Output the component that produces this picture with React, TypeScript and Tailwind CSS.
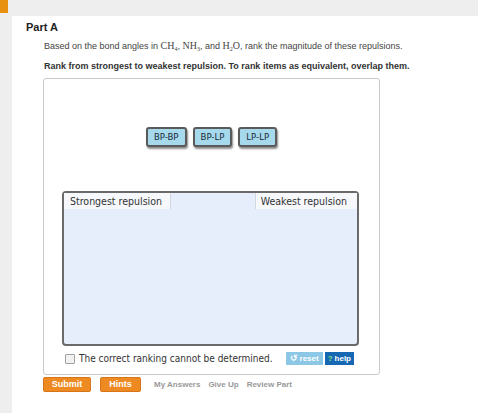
import React from "react";

const sans = { fontFamily: '"Liberation Sans", Arial, sans-serif' };
const tahoma = { fontFamily: '"DejaVu Sans Condensed", "DejaVu Sans", sans-serif' };
const serif = { fontFamily: '"Liberation Serif", "Times New Roman", serif' };

function Chip({ label }: { label: string }) {
  return (
    <div
      className="h-[20px] px-[6px] flex items-center justify-center rounded-[3px] border-2 border-[#5a5a5a] bg-[#a6d9ec] text-[9.5px] text-[#1a2a3a] shadow-[1px_2px_2px_rgba(0,0,0,0.45)]"
      style={tahoma}
    >
      {label}
    </div>
  );
}

export default function App() {
  return (
    <div className="w-[478px] h-[413px] bg-white flex flex-col overflow-hidden" style={sans}>
      {/* header strip */}
      <div className="h-[16px] bg-[#eeeeee] flex shrink-0">
        <div className="w-[8px] h-[13px] bg-[#e8900f]" />
      </div>
      <div className="flex flex-1">
        <div className="w-[12px] bg-[#eeeeee]" />
        <div className="flex-1 flex flex-col">
          <div className="pl-[14px] pt-[4px] text-[11px] font-bold text-[#222] leading-[14px]">Part A</div>
          <div className="pl-[32px] pt-[6px] text-[9px] text-[#444] leading-[11px]">
            Based on the bond angles in{" "}
            <span style={serif} className="text-[10px]">
              CH<sub className="text-[6px]">4</sub>
            </span>
            ,{" "}
            <span style={serif} className="text-[10px]">
              NH<sub className="text-[6px]">3</sub>
            </span>
            , and{" "}
            <span style={serif} className="text-[10px]">
              H<sub className="text-[6px]">2</sub>O
            </span>
            , rank the magnitude of these repulsions.
          </div>
          <div className="pl-[32px] pt-[9px] text-[9px] font-bold text-[#333] leading-[11px]">
            Rank from strongest to weakest repulsion. To rank items as equivalent, overlap them.
          </div>

          {/* ranking widget */}
          <div className="ml-[31px] mt-[6px] w-[337px] h-[297px] border border-[#c8c8c8] rounded-[3px] flex flex-col">
            <div className="flex gap-[6px] justify-center pt-[48px]">
              <Chip label="BP-BP" />
              <Chip label="BP-LP" />
              <Chip label="LP-LP" />
            </div>
            <div className="ml-[18px] mt-[44px] w-[297px] h-[155px] border-2 border-[#6a6a6a] rounded-[4px] bg-[#e6eefb] flex flex-col">
              <div className="flex justify-between text-[10.5px] text-[#333] leading-[16px]" style={tahoma}>
                <div className="bg-[#f6f8fc] pl-[6px] pr-[8px] border-r border-[#d4d8de]">Strongest repulsion</div>
                <div className="bg-[#f6f8fc] pl-[5px] pr-[10px] border-l border-[#d4d8de]">Weakest repulsion</div>
              </div>
            </div>
            <div className="flex items-center mt-[5px] pl-[21px] pr-[25px]">
              <div className="w-[10px] h-[10px] border border-[#a0a0a0] bg-[#f2f2f2] rounded-[1px]" />
              <div className="ml-[4px] text-[10px] text-[#333]" style={tahoma}>
                The correct ranking cannot be determined.
              </div>
              <div className="flex-1" />
              <div className="h-[13px] px-[4px] bg-[#8cc8e6] text-white text-[8px] font-bold flex items-center gap-[2px]">
                <span className="text-[9px]">↺</span>reset
              </div>
              <div className="ml-[2px] h-[13px] px-[3px] bg-[#1768b2] text-white text-[8px] font-bold flex items-center gap-[2px]">
                <span className="text-[#7fe07f]">?</span>help
              </div>
            </div>
          </div>

          {/* actions */}
          <div className="ml-[31px] mt-[2px] flex items-center">
            <div className="w-[48px] h-[15px] rounded-[2px] bg-[#ee8a22] border border-[#d8741a] text-white text-[9px] font-bold flex items-center justify-center">
              Submit
            </div>
            <div className="ml-[9px] w-[41px] h-[15px] rounded-[2px] bg-[#ee8a22] border border-[#d8741a] text-white text-[9px] font-bold flex items-center justify-center">
              Hints
            </div>
            <div className="ml-[13px] flex gap-[8px] text-[8px] font-bold text-[#999]">
              <span>My Answers</span>
              <span>Give Up</span>
              <span>Review Part</span>
            </div>
          </div>
        </div>
      </div>
    </div>
  );
}
